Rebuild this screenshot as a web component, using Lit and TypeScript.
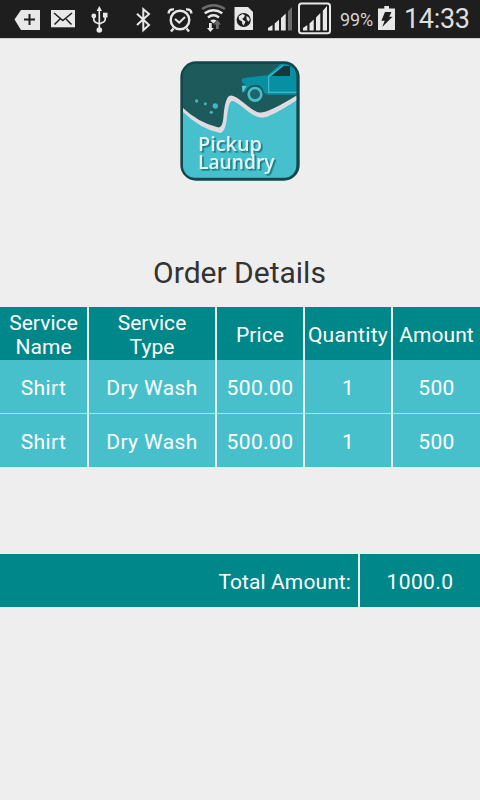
import { LitElement, html, svg, css } from "lit";
import { customElement } from "lit/decorators.js";

const icon = (x: number, w: number, body: unknown) =>
  html`<svg width=${w} height="38" viewBox="${x} 0 ${w} 38">${body}</svg>`;

@customElement("status-bar")
class StatusBar extends LitElement {
  static styles = css`
    :host { display: flex; height: 38px; background: #1e1e1e; color: #e8e8e8; font-family: Roboto, sans-serif; box-shadow: 0 1px 0 #cfcdcd; position: relative; }
    svg { display: block; flex: none; fill: #e8e8e8; }
    .s { fill: none; stroke: #e8e8e8; stroke-width: 2; }
    .thin { stroke-width: 1.7; }
    .bold { stroke-width: 2.4; }
    .d { fill: none; stroke: #1e1e1e; stroke-width: 2; }
    .fine { stroke-width: 1.5; }
    .k { fill: #1e1e1e; }
    .g { fill: #6b6b6b; }
    .gs { fill: none; stroke: #6b6b6b; stroke-width: 2.4; }
    .pct { width: 37px; padding-left: 1px; box-sizing: border-box; font-size: 18px; line-height: 39px; letter-spacing: -0.1px; color: #d4d4d4; }
    .time { padding-left: 2px; font-size: 27px; line-height: 38px; letter-spacing: -0.3px; color: #dedede; white-space: nowrap; }
  `;
  render() {
    return html`
      ${icon(0, 45, svg`
        <path d="M14.5 19.5L21 10H40V30H21Z"/>
        <path class="d" d="M24 19.5H35M29.5 14V25"/>`)}
      ${icon(45, 35, svg`
        <path d="M51 10H75V27.3H51Z"/>
        <path class="d fine" d="M54 13L62.8 20.5L72 13M54.5 24.5L60 19M71.5 24.5L66 19"/>`)}
      ${icon(80, 40, svg`
        <path d="M99.3 6L102 11H96.6Z"/>
        <circle cx="99.3" cy="30" r="2.8"/>
        <circle cx="93.8" cy="16" r="2.4"/>
        <path d="M103 12.7H107.5V17.5H103Z"/>
        <path class="s thin" d="M99.3 9V30M93.8 16V19.5Q94 22 96.5 22.8L99.3 24M105.2 17V19.5Q105 21.7 102.3 22.5L99.3 24"/>`)}
      ${icon(120, 42, svg`
        <path class="s" d="M137 13.8L149 25L143.3 30.3V9.2L149 14L137 25"/>`)}
      ${icon(162, 36, svg`
        <circle class="s bold" cx="180" cy="20" r="9.3"/>
        <path class="s" d="M175 19L179.2 22.6L185 17"/>
        <path class="s bold" d="M168.6 13.6Q168.6 9 174 9.4M191.4 13.6Q191.4 9 186 9.4M173.5 28.5L171 31.5M186.5 28.5L189 31.5"/>`)}
      ${icon(198, 32, svg`
        <path class="gs" d="M202 9Q213.4 1.5 225 9"/>
        <path class="s bold" d="M204.7 13.2Q213.4 7.2 222.3 13.2M208 17.5Q213.4 13.2 219 17.5"/>
        <path d="M210.3 20.6Q213.4 18.3 216.6 20.6L213.4 23.5Z"/>
        <path d="M209 23H211.7V28H213.8L210.4 32L207 28H209Z"/>
        <path class="g" d="M216 29V24.5H213.8L217.4 20L221 24.5H218.8V29Z"/>`)}
      ${icon(230, 33, svg`
        <path d="M234.5 7H248L253 12V30H234.5Z"/>
        <circle class="k" cx="243.7" cy="20" r="7.1"/>
        <path d="M238.7 16.2L242.5 14L245 15.2L244 17.5L242.2 18.8L243.5 20.2L245.5 21.6L243.7 25.4L242.3 24L242 21.5L239 19.4ZM246.3 16L249 17.5L249.8 20L248.4 21.7L246.7 19.5Z"/>`)}
      ${icon(263, 33, svg`
        <path d="M268 30.5V28L272.5 25V30.5ZM274.7 30.5V23.6L279 19.8V30.5ZM281 30.5V18L285.7 13.4V30.5Z"/>
        <path class="g" d="M288 30.5V11.2L292 7V30.5Z"/>`)}
      ${icon(296, 43, svg`
        <rect class="s" x="299" y="3.6" width="31" height="29.7" rx="2.5"/>
        <path d="M303 30.5V28L307.3 25V30.5ZM309.5 30.5V23.4L313.7 19.5V30.5ZM316 30.5V17.5L320.3 13V30.5ZM322.8 30.5V10.7L327 6V30.5Z"/>`)}
      <div class="pct">99%</div>
      ${icon(376, 26, svg`
        <path d="M378 8.5H384.3V6H389V8.5H395V30H378Z"/>
        <path class="k" d="M385 12H391.5L389.2 16.7H392.5L382.2 27L384.7 20.8H381.4Z"/>`)}
      <div class="time">14:33</div>
    `;
  }
}

@customElement("pickup-logo")
class PickupLogo extends LitElement {
  static styles = css`
    :host { display: block; width: 120px; height: 120px; }
    svg { display: block; }
    text { font-family: "Open Sans", "Noto Sans", sans-serif; font-weight: 600; font-size: 58px; fill: #e3f4f6; filter: drop-shadow(5px 5px 2px rgba(13, 85, 95, 0.65)); }
  `;
  render() {
    return html`<svg width="120" height="120" viewBox="30 33 360 360">
      <defs>
        <clipPath id="c"><rect x="39" y="42" width="340" height="341" rx="36"/></clipPath>
      </defs>
      <rect x="31" y="34" width="358" height="358" rx="47" fill="#12484b"/>
      <g clip-path="url(#c)">
        <rect x="36" y="38" width="350" height="350" fill="#1d5a5b"/>
        <path d="M36 180Q82 224 145 240Q158 242 161 218Q166 162 176 145Q183 137 200 147C235 174 256 198 284 194Q306 190 382 140V390H36Z" fill="#45c0cc"/>
        <path d="M38 173Q82 216 143 232Q157 236 160 205Q163 156 174 141Q181 131 198 142C234 165 253 192 278 187Q304 183 382 135V149Q310 196 284 202C252 208 225 173 196 156Q184 149 180 158Q174 170 171 200Q167 246 150 249Q94 239 38 185Z" fill="#dedce1"/>
        <g fill="#0790a4">
          <path d="M216 86L228 83L293 76L331 42H382V134H291L282 128Q278 104 256 104Q235 104 226 125L218 127L215 107L226 102L216 98Z"/>
          <path d="M304 78L340 48H360V78Z" fill="#17383d"/>
          <path d="M340 46L296 80V127H382" fill="none" stroke="#42b6c5" stroke-width="4"/>
          <path d="M216 108H230L218 128Z" fill="#67c5ce"/>
          <circle cx="255" cy="133" r="26" fill="#1d5a5b"/>
          <circle cx="255" cy="133" r="19" fill="#21636a" stroke="#45bfcb" stroke-width="8"/>
        </g>
        <g fill="#3fb6c2"><circle cx="80" cy="153" r="5"/><circle cx="106" cy="161" r="4.5"/><circle cx="136" cy="168" r="8"/><circle cx="124" cy="187" r="5"/></g>
        <text x="84" y="303" textLength="192" lengthAdjust="spacingAndGlyphs">Pickup</text>
        <text x="84" y="357" textLength="230" lengthAdjust="spacingAndGlyphs">Laundry</text>
      </g>
    </svg>`;
  }
}

@customElement("app-root")
class AppRoot extends LitElement {
  static styles = css`
    :host { display: flex; flex-direction: column; height: 800px; background: #eeeeee; font-family: Roboto, sans-serif; overflow: hidden; }
    pickup-logo { margin: 23px auto 0; }
    h1 { margin: 71px 0 0; height: 55px; line-height: 42px; font-size: 30px; font-weight: 400; text-align: center; color: #333; padding-right: 1px; }
    .row { display: grid; grid-template-columns: 87px 126px 86px 86px 87px; column-gap: 2px; height: 53px; color: #fff; font-size: 21px; line-height: 24px; letter-spacing: 0.4px; }
    .head { letter-spacing: 0.05px; }
    .head .cell:nth-child(4) { letter-spacing: 0.3px; }
    .cell { display: flex; align-items: center; justify-content: center; text-align: center; background: #48c0cc; padding-top: 2px; box-sizing: border-box; white-space: pre-line; }
    .head .cell, .total .cell { background: #008789; }
    .rule { height: 1px; background: #bcd9dc; }
    .total { margin-top: 87px; grid-template-columns: 358px 120px; }
    .total .label { justify-content: flex-end; padding-right: 7px; letter-spacing: 0.1px; }
  `;
  private heads = ["Service\nName", "Service\nType", "Price", "Quantity", "Amount"];
  private orders = [
    ["Shirt", "Dry Wash", "500.00", "1", "500"],
    ["Shirt", "Dry Wash", "500.00", "1", "500"],
  ];
  render() {
    return html`
      <status-bar></status-bar>
      <pickup-logo></pickup-logo>
      <h1>Order Details</h1>
      <div class="row head">${this.heads.map((t) => html`<div class="cell">${t}</div>`)}</div>
      ${this.orders.map((o, i) => html`
        ${i ? html`<div class="rule"></div>` : ""}
        <div class="row">${o.map((t) => html`<div class="cell">${t}</div>`)}</div>`)}
      <div class="row total"><div class="cell label">Total Amount:</div><div class="cell">1000.0</div></div>
    `;
  }
}
